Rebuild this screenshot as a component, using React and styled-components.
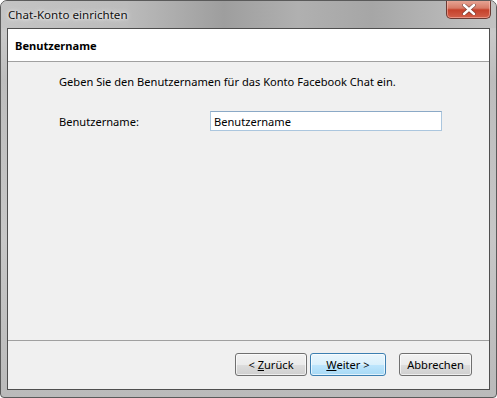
import React from 'react'
import styled, { createGlobalStyle } from 'styled-components'

const Global = createGlobalStyle`
  html, body {
    margin: 0;
    padding: 0;
    background: #ffffff;
  }
  body {
    font-family: 'Noto Sans', 'Open Sans', sans-serif;
    font-size: 11.1px;
    color: #000;
  }
`

const Frame = styled.div`
  width: 497px;
  height: 398px;
  box-sizing: border-box;
  display: flex;
  flex-direction: column;
  border: 1px solid #5a5a5a;
  border-radius: 7px 7px 4px 4px;
  background: linear-gradient(180deg, #b9b9b9 0%, #c9c9c9 8%, #bdbdbd 20%, #c7c7c7 60%, #bababa 100%);
  overflow: hidden;
`

const TitleBar = styled.div`
  height: 27px;
  display: flex;
  align-items: flex-start;
  justify-content: space-between;
  padding-left: 7px;
  background: linear-gradient(90deg, #c4c4c4 0%, #bcbcbc 25%, #9e9e9e 45%, #b0b0b0 60%, #a6a6a6 75%, #c2c2c2 100%);
`

const Title = styled.span`
  margin-top: 6px;
  font-size: 11.6px;
  color: #111;
  text-shadow: 0 0 6px rgba(255, 255, 255, 0.9), 0 0 3px rgba(255, 255, 255, 0.9);
`

const CloseButton = styled.div`
  width: 45px;
  height: 19px;
  margin-right: 5px;
  margin-top: -1px;
  box-sizing: border-box;
  border: 1px solid #6b3a33;
  border-top: none;
  border-radius: 0 0 5px 5px;
  background: linear-gradient(180deg, #e8a999 0%, #d77b67 45%, #c5412b 55%, #d2604a 100%);
  box-shadow: inset 0 0 0 1px rgba(255, 200, 190, 0.5);
  display: flex;
  align-items: center;
  justify-content: center;
`

const Client = styled.div`
  flex: 1;
  margin: 0 6px 7px 6px;
  border: 1px solid #4e4e4e;
  background: #f0f0f0;
  display: flex;
  flex-direction: column;
`

const Header = styled.div`
  height: 32px;
  background: #ffffff;
  border-bottom: 1px solid #a0a0a0;
  display: flex;
  align-items: center;
  padding-left: 7px;
  font-weight: bold;
`

const Body = styled.div`
  flex: 1;
  padding: 12px 0 0 51px;
  display: flex;
  flex-direction: column;
`

const Intro = styled.p`
  margin: 0;
`

const FieldRow = styled.div`
  display: grid;
  grid-template-columns: 151px 232px;
  align-items: center;
  margin-top: 22px;
`

const Input = styled.input`
  box-sizing: border-box;
  height: 20px;
  width: 232px;
  border: 1px solid #abc6de;
  border-top-color: #8ba9c6;
  background: #fff;
  padding: 0 3px;
  font-family: inherit;
  font-size: 11.1px;
  color: #000;
  outline: none;
`

const Footer = styled.div`
  height: 49px;
  border-top: 1px solid #a0a0a0;
  display: flex;
  align-items: flex-start;
  padding: 12px 17px 0 0;
  box-sizing: border-box;
  justify-content: flex-end;
`

const Button = styled.button`
  height: 23px;
  width: ${(p) => p.$w}px;
  margin-left: ${(p) => p.$gap}px;
  box-sizing: border-box;
  border: 1px solid ${(p) => (p.$primary ? '#3c7fb1' : '#707070')};
  border-radius: 3px;
  background: ${(p) =>
    p.$primary
      ? 'linear-gradient(180deg, #eaf6fd 0%, #d9f0fc 50%, #bee6fd 51%, #a7d9f5 100%)'
      : 'linear-gradient(180deg, #f2f2f2 0%, #ebebeb 50%, #dddddd 51%, #cfcfcf 100%)'};
  box-shadow: inset 0 0 0 1px rgba(255, 255, 255, 0.65);
  font-family: inherit;
  font-size: 11.1px;
  color: #000;
  padding: 0;
  u {
    text-decoration: underline;
  }
`

const App = () => {
  return (
    <>
      <Global />
      <Frame>
        <TitleBar>
          <Title>Chat-Konto einrichten</Title>
          <CloseButton>
            <svg width="14" height="11" viewBox="0 0 14 11">
              <path
                d="M2 1 L12 10 M12 1 L2 10"
                stroke="#3a2a2a"
                strokeWidth="4"
                strokeLinecap="round"
                opacity="0.5"
              />
              <path d="M2 1 L12 10 M12 1 L2 10" stroke="#ffffff" strokeWidth="2.4" strokeLinecap="round" />
            </svg>
          </CloseButton>
        </TitleBar>
        <Client>
          <Header>Benutzername</Header>
          <Body>
            <Intro>Geben Sie den Benutzernamen für das Konto Facebook Chat ein.</Intro>
            <FieldRow>
              <span>Benutzername:</span>
              <Input defaultValue="Benutzername" />
            </FieldRow>
          </Body>
          <Footer>
            <Button $w={72} $gap={0}>
              &lt; <u>Z</u>urück
            </Button>
            <Button $w={76} $gap={3} $primary>
              <u>W</u>eiter &gt;
            </Button>
            <Button $w={73} $gap={13}>
              Abbrechen
            </Button>
          </Footer>
        </Client>
      </Frame>
    </>
  )
}

export default App
